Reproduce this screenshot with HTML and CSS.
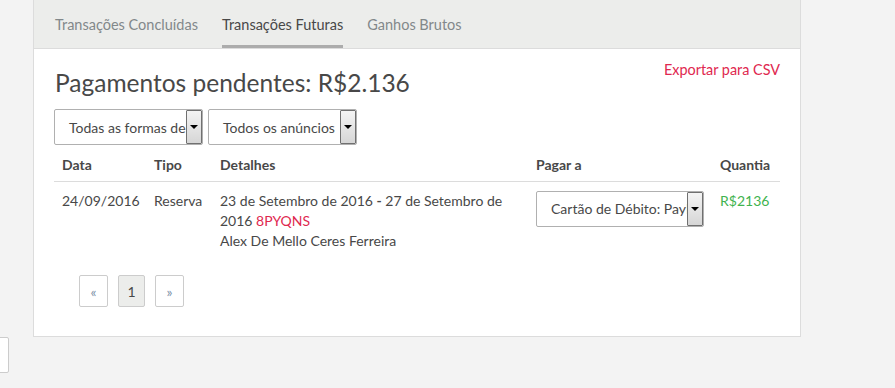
FILE: index.html
```html
<!DOCTYPE html>
<html lang="pt-BR">
<head>
<meta charset="utf-8">
<title>Transações Futuras</title>
<link rel="stylesheet" href="styles.css">
</head>
<body>
<div class="page">
  <section class="card">
    <nav class="tabs">
      <a class="tab">Transações Concluídas</a>
      <a class="tab active">Transações Futuras</a>
      <a class="tab">Ganhos Brutos</a>
    </nav>
    <div class="card-body">
      <div class="title-row">
        <h1 class="title">Pagamentos pendentes: R$2.136</h1>
        <a class="export">Exportar para CSV</a>
      </div>
      <div class="filters">
        <div class="select"><span class="select-text">Todas as formas de pagamento</span><span class="select-btn"><span class="caret"></span></span></div>
        <div class="select"><span class="select-text">Todos os anúncios</span><span class="select-btn"><span class="caret"></span></span></div>
      </div>
      <div class="table">
        <div class="row head">
          <div class="cell">Data</div>
          <div class="cell">Tipo</div>
          <div class="cell">Detalhes</div>
          <div class="cell">Pagar a</div>
          <div class="cell">Quantia</div>
        </div>
        <div class="row body-row">
          <div class="cell">24/09/2016</div>
          <div class="cell">Reserva</div>
          <div class="cell">23 de Setembro de 2016 <b class="dash">-</b> 27 de Setembro de 2016 <span class="code">8PYQNS</span><br>Alex De Mello Ceres Ferreira</div>
          <div class="cell">
            <div class="select pay"><span class="select-text">Cartão de Débito: PayPal</span><span class="select-btn"><span class="caret"></span></span></div>
          </div>
          <div class="cell amount">R$2136</div>
        </div>
      </div>
      <div class="pager">
        <a class="page-btn arrow">«</a>
        <a class="page-btn current">1</a>
        <a class="page-btn arrow">»</a>
      </div>
    </div>
  </section>
  <div class="footer-row">
    <div class="stub"></div>
  </div>
</div>
</body>
</html>
```

FILE: styles.css
```css
* { box-sizing: border-box; }
html, body { margin: 0; padding: 0; }
body {
  background: #f3f3f3;
  font-family: Lato, "Liberation Sans", sans-serif;
  color: #484848;
  font-size: 14px;
  width: 895px;
  height: 388px;
  overflow: hidden;
}
.page { display: flex; flex-direction: column; }
.card {
  margin-left: 33px;
  width: 768px;
  background: #fff;
  border: 1px solid #dcdcdc;
  border-top: none;
}
.tabs {
  display: flex;
  gap: 24px;
  height: 49px;
  padding-left: 21px;
  background: #ecedeb;
  border-bottom: 1px solid #dcdcdc;
}
.tab {
  display: flex;
  align-items: center;
  height: 48px;
  padding-top: 3px;
  border-bottom: 3px solid transparent;
  font-size: 14.5px;
  color: #82888a;
  cursor: pointer;
}
.tab.active { color: #484848; border-bottom-color: #acacac; }
.card-body { padding: 0 20px 29px; }
.title-row {
  display: flex;
  justify-content: space-between;
  align-items: flex-start;
  padding-top: 17px;
}
.title {
  margin: 0;
  font-weight: 400;
  font-size: 24.5px;
  line-height: 34px;
  padding-left: 1px;
  color: #484848;
}
.export {
  font-size: 14.4px;
  color: #e0284f;
  line-height: 20px;
  margin-top: -6px;
}
.filters { display: flex; gap: 5px; margin-top: 9px; }
.select {
  position: relative;
  width: 149px;
  height: 36px;
  border: 1px solid #b0b0b0;
  border-radius: 2px;
  background: #fff;
  overflow: hidden;
  display: flex;
  align-items: center;
  padding-left: 14px;
}
.select-text { white-space: nowrap; font-size: 14px; color: #484848; }
.select-btn {
  position: absolute;
  top: 0;
  right: 0;
  width: 16px;
  height: 34px;
  border: 1px solid #707070;
  border-radius: 1px;
  background: linear-gradient(#f4f4f4, #d6d6d6);
  display: flex;
  align-items: center;
  justify-content: center;
}
.caret {
  width: 0;
  height: 0;
  border-left: 4px solid transparent;
  border-right: 4px solid transparent;
  border-top: 4px solid #000;
  margin-top: -1px;
}
.table { margin-top: 0; }
.row {
  display: grid;
  grid-template-columns: 92px 66px 316px 184px 68px;
}
.head {
  height: 37px;
  align-items: center;
  border-bottom: 1px solid #dcdcdc;
  font-weight: 700;
}
.head .cell { padding-top: 3px; }
.cell { padding: 0 8px; line-height: 20px; }
.body-row .cell { padding-top: 9px; padding-bottom: 10px; }
.dash { font-weight: 700; }
.code { color: #e0284f; }
.amount { color: #3fb34f; }
.select.pay { width: 168px; }
.pager { display: flex; gap: 10px; margin-top: 14px; padding-left: 25px; }
.page-btn {
  width: 29px;
  height: 32px;
  border: 1px solid #cccccc;
  border-radius: 2px;
  display: flex;
  align-items: center;
  justify-content: center;
  font-size: 14px;
  color: #484848;
  background: #fff;
}
.page-btn.arrow { color: #7f93aa; }
.page-btn.current { background: #ecedeb; width: 27px; }
.footer-row { display: flex; }
.stub {
  margin-left: -20px;
  width: 29px;
  height: 36px;
  background: #fff;
  border: 1px solid #cccccc;
  border-radius: 2px;
}
```
